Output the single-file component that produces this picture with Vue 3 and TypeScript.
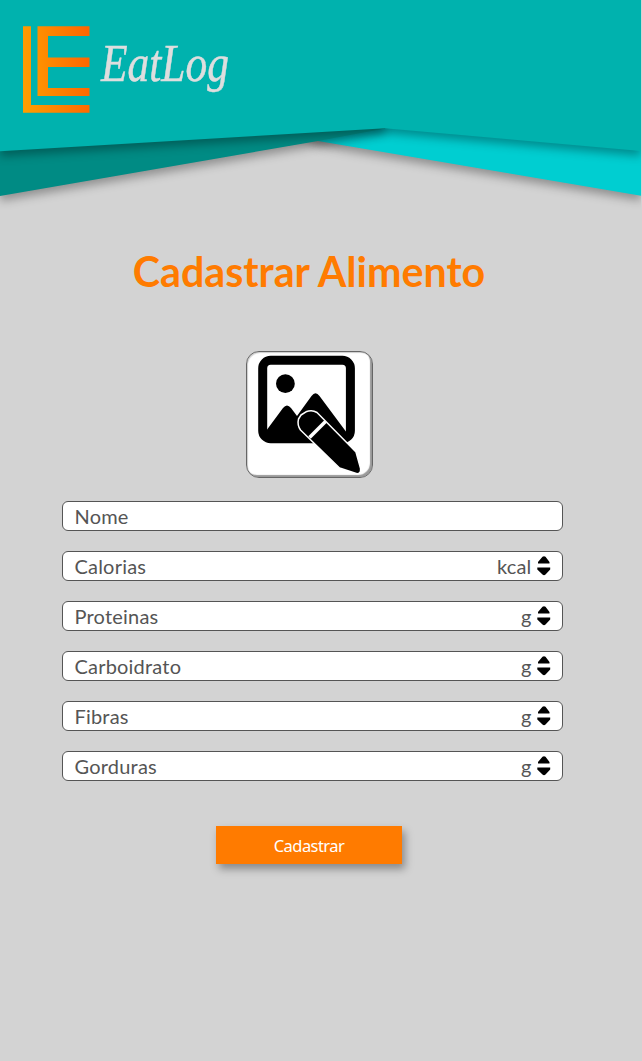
<script setup lang="ts">
interface Field {
  label: string
  unit?: string
}

const fields: Field[] = [
  { label: 'Nome' },
  { label: 'Calorias', unit: 'kcal' },
  { label: 'Proteinas', unit: 'g' },
  { label: 'Carboidrato', unit: 'g' },
  { label: 'Fibras', unit: 'g' },
  { label: 'Gorduras', unit: 'g' },
]
</script>

<template>
  <div class="page">
    <header class="header">
      <svg class="banner" width="641" height="220" viewBox="0 0 641 220">
        <polygon class="fold" points="250,100 641,100 641,195.7 318,141" fill="#00ced1" />
        <polygon class="fold" points="0,100 385,100 385,128.5 318,141 0,196" fill="#008b84" />
        <polygon class="fold" points="0,0 641,0 641,151 385,128.3 0,151.3" fill="#00b2ae" />
      </svg>
      <div class="brand">
        <svg class="mark" width="67" height="87" viewBox="0 0 67 87">
          <defs>
            <linearGradient id="markFill" gradientUnits="userSpaceOnUse" x1="0" y1="45" x2="67" y2="40">
              <stop offset="0" stop-color="#ff9d00" />
              <stop offset="1" stop-color="#ff6600" />
            </linearGradient>
          </defs>
          <path
            d="M0 .3H8V79H66.500V86.700H0ZM14.500 .3H66.500V10H25V31.500H66.500V41H25V62H66.500V70H14.500Z"
            fill="url(#markFill)"
          />
        </svg>
        <svg class="wordmark" width="150" height="90" viewBox="0 0 150 90">
          <text x="4" y="55" textLength="128" lengthAdjust="spacingAndGlyphs">EatLog</text>
        </svg>
      </div>
    </header>

    <main class="content">
      <h1>Cadastrar Alimento</h1>

      <button class="photo" type="button" aria-label="Imagem">
        <svg width="127" height="127" viewBox="0 0 127 127">
          <rect x="16.700" y="9.300" width="87.700" height="78.400" rx="8" fill="none" stroke="#000" stroke-width="9" />
          <circle cx="39.400" cy="32.700" r="9.400" />
          <path d="M20 83V80L37 57Q41 52 45 57L51 65L65.500 45Q69.500 39.500 73.500 45L101 82V86H20Z" />
          <path
            d="M55 64L60 60.800Q66 58.300 71 61.500L110 101L114.600 117.500Q115 122.800 111 122.700L93.500 117L54.500 79Q51 74 52.500 68Z"
            stroke="#fff"
            stroke-width="1.500"
            stroke-linejoin="round"
          />
          <path d="M63.500 86.500L79.500 70.500" fill="none" stroke="#fff" stroke-width="3.600" />
        </svg>
      </button>

      <form class="form" @submit.prevent>
        <div v-for="field in fields" :key="field.label" class="field">
          <span>{{ field.label }}</span>
          <span v-if="field.unit" class="unit">
            {{ field.unit }}
            <svg width="14" height="20" viewBox="0 0 14 20">
              <path d="M5.500 .8Q7 -.3 8.500 .8L12.500 6V7.500H1V6ZM.3 11.500H13.200V13.500L8.500 18.500Q7 19.800 5.500 18.500L.3 13.500Z" />
            </svg>
          </span>
        </div>
        <button class="submit" type="submit">Cadastrar</button>
      </form>
    </main>
  </div>
</template>

<style>
body {
  margin: 0;
  background: #d3d3d3;
}
</style>

<style scoped>
.page {
  width: 641px;
  height: 1061px;
  overflow: hidden;
  background: #d3d3d3;
  font-family: Lato, sans-serif;
}

.header {
  position: relative;
  height: 220px;
}

.banner {
  position: absolute;
  inset: 0;
  overflow: visible;
}

.fold {
  filter: drop-shadow(0 5px 5px rgba(0, 0, 0, 0.32));
}

.brand {
  position: relative;
  display: flex;
  align-items: flex-start;
  gap: 7px;
  padding: 26px 0 0 23px;
}

.wordmark {
  overflow: visible;
  fill: #dedede;
  stroke: #dedede;
  stroke-width: 0.5px;
  font: italic 53px 'Liberation Serif', serif;
}

.content {
  display: flex;
  flex-direction: column;
  align-items: center;
  width: 618px;
}

h1 {
  margin: 26px 0 0;
  color: #ff7b00;
  font-size: 41.2px;
  font-weight: 700;
  line-height: 50px;
  white-space: nowrap;
}

.photo {
  box-sizing: border-box;
  width: 127px;
  height: 127px;
  margin: 55px 0 0 1px;
  padding: 0;
  border: 1px solid #666;
  border-radius: 13px;
  background: #fff;
  box-shadow: inset -2px -2px 1px #999, inset 1px 1px 1px #ccc;
}

.photo svg {
  display: block;
  margin: -1px;
}

.form {
  display: flex;
  flex-direction: column;
  gap: 20px;
  width: 501px;
  margin: 23px 0 0 7px;
}

.field {
  box-sizing: border-box;
  display: flex;
  align-items: center;
  justify-content: space-between;
  height: 30px;
  padding: 0 11.5px;
  border: 1px solid #555;
  border-radius: 6px;
  background: #fff;
  color: #555;
  font-size: 20px;
  letter-spacing: 0.2px;
  line-height: 28px;
}

.unit {
  display: flex;
  align-items: center;
  gap: 5px;
}

.submit {
  width: 186px;
  height: 38px;
  margin: 25px 0 0 154px;
  padding: 0;
  border: 0;
  background: #ff7b00;
  box-shadow: 3px 5px 8px rgba(0, 0, 0, 0.35);
  color: #fff;
  font-family: 'Noto Sans', sans-serif;
  font-size: 16.5px;
  letter-spacing: -0.55px;
}
</style>
